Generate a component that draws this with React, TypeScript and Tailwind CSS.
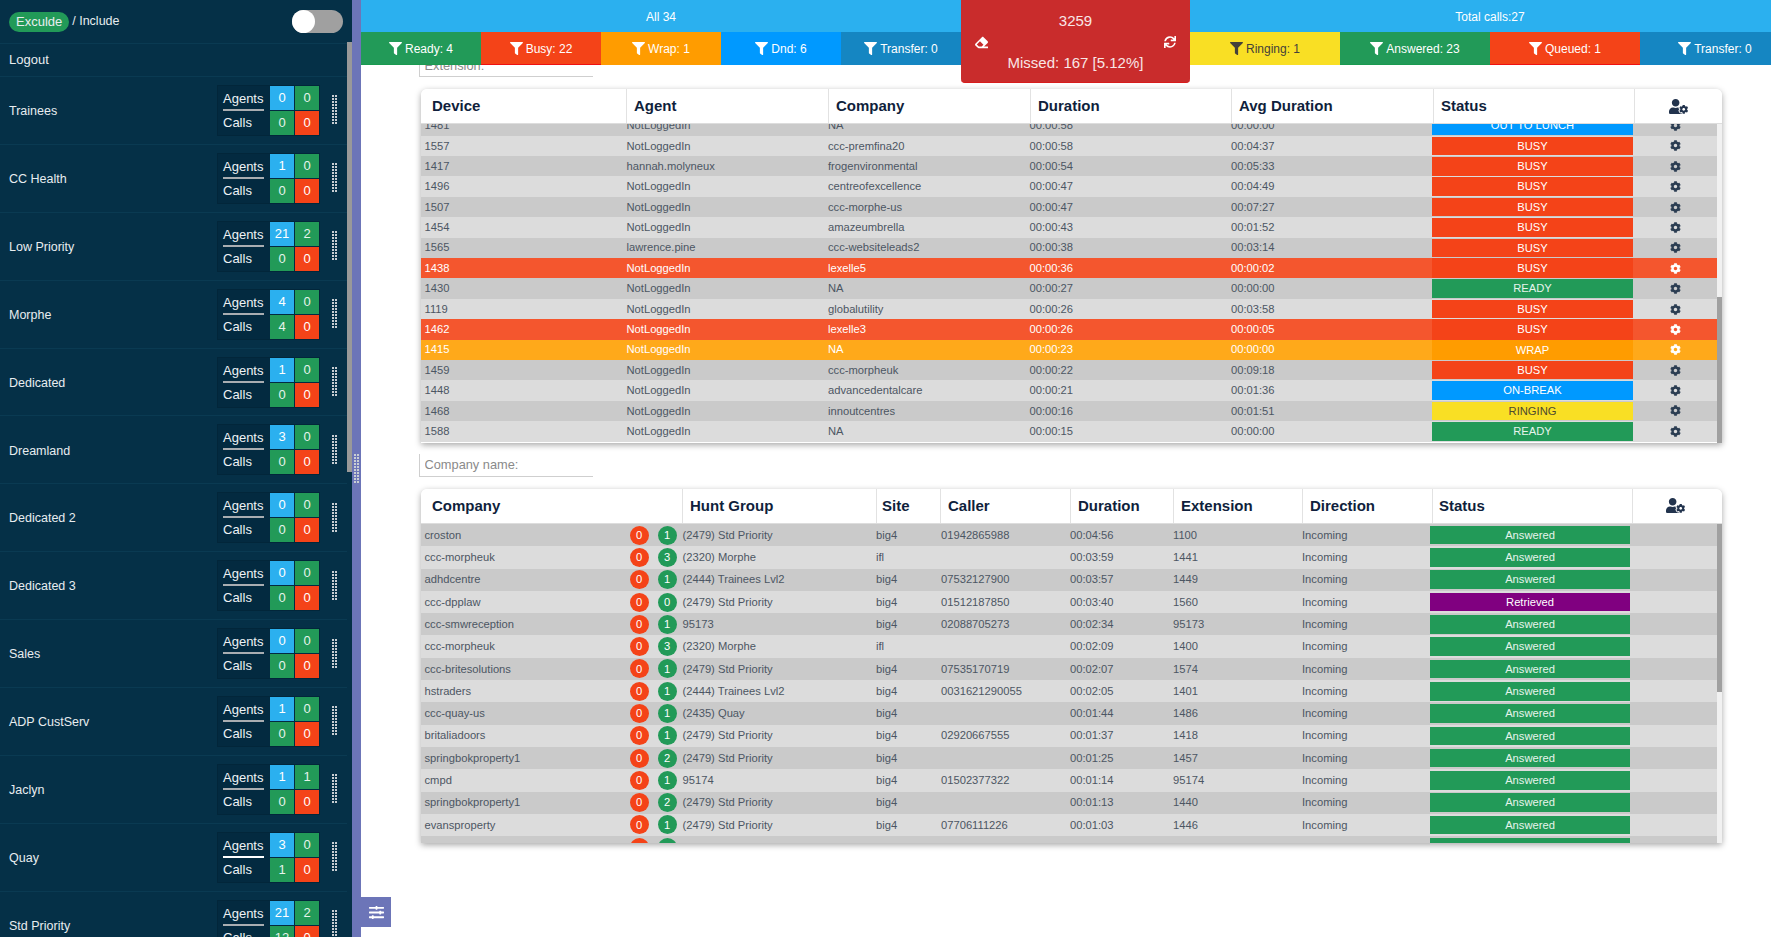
import { FaCog, FaEraser, FaFilter, FaSlidersH, FaSync, FaUserCog } from "react-icons/fa";

const queues = [
  { name: "Trainees", a: [0, 0], c: [0, 0] },
  { name: "CC Health", a: [1, 0], c: [0, 0] },
  { name: "Low Priority", a: [21, 2], c: [0, 0] },
  { name: "Morphe", a: [4, 0], c: [4, 0] },
  { name: "Dedicated", a: [1, 0], c: [0, 0] },
  { name: "Dreamland", a: [3, 0], c: [0, 0] },
  { name: "Dedicated 2", a: [0, 0], c: [0, 0] },
  { name: "Dedicated 3", a: [0, 0], c: [0, 0] },
  { name: "Sales", a: [0, 0], c: [0, 0] },
  { name: "ADP CustServ", a: [1, 0], c: [0, 0] },
  { name: "Jaclyn", a: [1, 1], c: [0, 0] },
  { name: "Quay", a: [3, 0], c: [1, 0] },
  { name: "Std Priority", a: [21, 2], c: [12, 0] },
];

const leftStats = [
  { label: "Ready: 4", cls: "bg-[#229a58] border-[#1a9a50]" },
  { label: "Busy: 22", cls: "bg-[#f44318] border-[#f01010]" },
  { label: "Wrap: 1", cls: "bg-[#ff9c00] border-[#ff9c00]" },
  { label: "Dnd: 6", cls: "bg-[#0099ff] border-[#0099ff]" },
  { label: "Transfer: 0", cls: "bg-[#1586c2] border-[#1586c2]" },
];

const rightStats = [
  { label: "Ringing: 1", cls: "bg-[#f9df24] border-[#f9df24] text-[#44413a]" },
  { label: "Answered: 23", cls: "bg-[#229a58] border-[#1a9a50] text-white" },
  { label: "Queued: 1", cls: "bg-[#f44318] border-[#f01010] text-white" },
  { label: "Transfer: 0", cls: "bg-[#1586c2] border-[#1586c2] text-white" },
];

const statusCls: Record<string, string> = {
  "OUT TO LUNCH": "bg-[#0099ff] text-white",
  BUSY: "bg-[#f44318] text-white",
  READY: "bg-[#229a58] text-[#e6f4ec]",
  WRAP: "bg-[#ff9c00] text-white",
  "ON-BREAK": "bg-[#0099ff] text-white",
  RINGING: "bg-[#f9df24] text-[#4c4a30]",
};

const devices = [
  ["1481", "NotLoggedIn", "NA", "00:00:58", "00:00:00", "OUT TO LUNCH"],
  ["1557", "NotLoggedIn", "ccc-premfina20", "00:00:58", "00:04:37", "BUSY"],
  ["1417", "hannah.molyneux", "frogenvironmental", "00:00:54", "00:05:33", "BUSY"],
  ["1496", "NotLoggedIn", "centreofexcellence", "00:00:47", "00:04:49", "BUSY"],
  ["1507", "NotLoggedIn", "ccc-morphe-us", "00:00:47", "00:07:27", "BUSY"],
  ["1454", "NotLoggedIn", "amazeumbrella", "00:00:43", "00:01:52", "BUSY"],
  ["1565", "lawrence.pine", "ccc-websiteleads2", "00:00:38", "00:03:14", "BUSY"],
  ["1438", "NotLoggedIn", "lexelle5", "00:00:36", "00:00:02", "BUSY", "red"],
  ["1430", "NotLoggedIn", "NA", "00:00:27", "00:00:00", "READY"],
  ["1119", "NotLoggedIn", "globalutility", "00:00:26", "00:03:58", "BUSY"],
  ["1462", "NotLoggedIn", "lexelle3", "00:00:26", "00:00:05", "BUSY", "red"],
  ["1415", "NotLoggedIn", "NA", "00:00:23", "00:00:00", "WRAP", "orange"],
  ["1459", "NotLoggedIn", "ccc-morpheuk", "00:00:22", "00:09:18", "BUSY"],
  ["1448", "NotLoggedIn", "advancedentalcare", "00:00:21", "00:01:36", "ON-BREAK"],
  ["1468", "NotLoggedIn", "innoutcentres", "00:00:16", "00:01:51", "RINGING"],
  ["1588", "NotLoggedIn", "NA", "00:00:15", "00:00:00", "READY"],
];

const calls = [
  ["croston", 0, 1, "(2479) Std Priority", "big4", "01942865988", "00:04:56", "1100", "Answered"],
  ["ccc-morpheuk", 0, 3, "(2320) Morphe", "ifl", "", "00:03:59", "1441", "Answered"],
  ["adhdcentre", 0, 1, "(2444) Trainees Lvl2", "big4", "07532127900", "00:03:57", "1449", "Answered"],
  ["ccc-dpplaw", 0, 0, "(2479) Std Priority", "big4", "01512187850", "00:03:40", "1560", "Retrieved"],
  ["ccc-smwreception", 0, 1, "95173", "big4", "02088705273", "00:02:34", "95173", "Answered"],
  ["ccc-morpheuk", 0, 3, "(2320) Morphe", "ifl", "", "00:02:09", "1400", "Answered"],
  ["ccc-britesolutions", 0, 1, "(2479) Std Priority", "big4", "07535170719", "00:02:07", "1574", "Answered"],
  ["hstraders", 0, 1, "(2444) Trainees Lvl2", "big4", "0031621290055", "00:02:05", "1401", "Answered"],
  ["ccc-quay-us", 0, 1, "(2435) Quay", "big4", "", "00:01:44", "1486", "Answered"],
  ["britaliadoors", 0, 1, "(2479) Std Priority", "big4", "02920667555", "00:01:37", "1418", "Answered"],
  ["springbokproperty1", 0, 2, "(2479) Std Priority", "big4", "", "00:01:25", "1457", "Answered"],
  ["cmpd", 0, 1, "95174", "big4", "01502377322", "00:01:14", "95174", "Answered"],
  ["springbokproperty1", 0, 2, "(2479) Std Priority", "big4", "", "00:01:13", "1440", "Answered"],
  ["evansproperty", 0, 1, "(2479) Std Priority", "big4", "07706111226", "00:01:03", "1446", "Answered"],
  ["", 0, 1, "", "", "", "", "", ""],
];

function Grip() {
  const rows = Array.from({ length: 10 }, (_, i) => i);
  return (
    <svg width="5" height="30" viewBox="0 0 5 30" className="shrink-0">
      {rows.map((i) => (
        <g key={i} fill="#c9ced3">
          <rect x="0" y={i * 3} width="2" height="2" />
          <rect x="3" y={i * 3} width="2" height="2" />
        </g>
      ))}
    </svg>
  );
}

function QueueRow({ q, bright }: { q: (typeof queues)[number]; bright: boolean }) {
  return (
    <div className="flex h-[67.9px] shrink-0 items-center border-b border-[#0a3a52] pl-[9px] pr-[10px]">
      <div className="flex-1 pt-[2px] text-[12.5px] text-[#e8edf0]">{q.name}</div>
      <div className="flex h-[51px] w-[103px] border border-[#02263a] bg-[#032a40]">
        <div className="flex w-[52px] flex-col pl-[5px] text-[13px] text-[#eef2f5]">
          <div className={`h-[25px] w-[41px] border-b-2 leading-[25px] ${bright ? "border-white" : "border-[#a9adb1]"}`}>Agents</div>
          <div className="h-[24px] leading-[24px]">Calls</div>
        </div>
        <div className="grid flex-1 grid-cols-2 gap-px text-center text-[13px] leading-[24px] text-[#e6f4ec]">
          <div className="bg-[#2bb0ef] text-white">{q.a[0]}</div>
          <div className="bg-[#229a58]">{q.a[1]}</div>
          <div className="bg-[#229a58]">{q.c[0]}</div>
          <div className="bg-[#f44318] text-white">{q.c[1]}</div>
        </div>
      </div>
      <div className="ml-[12px]">
        <Grip />
      </div>
    </div>
  );
}

function Sidebar() {
  return (
    <aside className="flex h-full w-[352px] shrink-0 flex-col bg-[#053047]">
      <div className="flex h-[44px] shrink-0 items-center border-b border-[#0a3a52] pl-[9px] pr-[9px] text-[13px] text-[#e8edf0]">
        <span className="rounded-full bg-[#229a58] px-[7px] leading-[20px]">Exculde</span>
        <span className="ml-[3px] flex-1 text-[12.5px]">/ Include</span>
        <div className="flex h-[23px] w-[51px] items-center rounded-full bg-[#a0a0a0]">
          <div className="h-[23px] w-[23px] rounded-full bg-white" />
        </div>
      </div>
      <div className="flex min-h-0 flex-1">
        <div className="flex w-[347px] flex-col overflow-hidden">
          <div className="flex h-[33px] shrink-0 items-center border-b border-[#0a3a52] pl-[9px] text-[13px] text-[#e8edf0]">Logout</div>
          {queues.map((q) => (
            <QueueRow key={q.name} q={q} bright={q.name === "Quay"} />
          ))}
        </div>
        <div className="-mt-[2px] h-[430px] w-[5px] bg-[#999999]" />
      </div>
    </aside>
  );
}

function Stat({ label, cls }: { label: string; cls: string }) {
  return (
    <div className={`flex h-full items-center justify-center gap-[3px] border-b pt-[1px] text-xs ${cls}`}>
      <FaFilter size={13} />
      <span>{label}</span>
    </div>
  );
}

function Header() {
  return (
    <header className="flex h-[65px] shrink-0 text-white">
      <div className="flex w-[600px] shrink-0 flex-col">
        <div className="flex h-[32px] items-center justify-center bg-[#2bb0ef] pt-[1px] text-xs">All 34</div>
        <div className="grid h-[33px] grid-cols-5">
          {leftStats.map((s) => (
            <Stat key={s.label} {...s} />
          ))}
        </div>
      </div>
      <div className="relative z-10 flex h-[83px] w-[229px] shrink-0 flex-col items-center rounded-b-[4px] border-b border-[#d81c1c] bg-[#c92c2c] text-[15px] text-[#f8e6e6]">
        <div className="mt-[12px] leading-[18px]">3259</div>
        <div className="mt-[3px] flex h-[18px] w-full items-center justify-between pl-[14px] pr-[14px]">
          <FaEraser size={13} className="text-white" />
          <FaSync size={12} className="text-white" />
        </div>
        <div className="mt-[3px] leading-[18px]">Missed: 167 [5.12%]</div>
      </div>
      <div className="flex min-w-0 flex-1 flex-col overflow-hidden">
        <div className="flex h-[32px] w-[600px] shrink-0 items-center justify-center pt-[1px] text-xs">Total calls:27</div>
        <div className="grid h-[33px] w-[600px] shrink-0 grid-cols-4">
          {rightStats.map((s) => (
            <Stat key={s.label} {...s} />
          ))}
        </div>
      </div>
    </header>
  );
}

function Scrollbar({ top, height }: { top: string; height: string }) {
  return (
    <div className="w-[5px] shrink-0 bg-[#f1f1f1]">
      <div className={`${top} ${height} bg-[#a0a0a0]`} />
    </div>
  );
}

function FilterInput({ placeholder }: { placeholder: string }) {
  return (
    <input
      placeholder={placeholder}
      className="-ml-[2px] block h-[23px] w-[174px] border-b border-l border-[#cfcfcf] pl-[4.5px] text-[12.8px] outline-none placeholder:text-[#8a8a8a]"
    />
  );
}

function HeadCell({ label, cls }: { label: string; cls: string }) {
  return <div className={`flex h-full items-center border-r border-[#e2e2e2] text-[15px] font-bold text-[#101f3c] ${cls}`}>{label}</div>;
}

function DeviceTable() {
  return (
    <section className="mt-[12px] overflow-hidden rounded-t-[6px] shadow-[0_2px_6px_rgba(0,0,0,0.35)]">
      <div className="flex h-[35px] border-b border-[#dddddd] bg-white">
        <HeadCell label="Device" cls="w-[206px] pl-[11px]" />
        <HeadCell label="Agent" cls="w-[202px] pl-[7px]" />
        <HeadCell label="Company" cls="w-[202px] pl-[7px]" />
        <HeadCell label="Duration" cls="w-[201px] pl-[7px]" />
        <HeadCell label="Avg Duration" cls="w-[202px] pl-[7px]" />
        <HeadCell label="Status" cls="w-[201px] pl-[7px]" />
        <div className="flex flex-1 items-center justify-center text-[#22334d]">
          <FaUserCog size={19} />
        </div>
      </div>
      <div className="flex h-[318.7px]">
        <div className="min-w-0 flex-1 overflow-hidden">
          <div className="-mt-[8.7px] text-[11.2px] text-[#4c5663]">
            {devices.map((d) => {
              const hl = d[6];
              const rowCls = hl === "red" ? "bg-[#f4562e] text-white" : hl === "orange" ? "bg-[#ffa91a] text-white" : "odd:bg-[#cacaca] even:bg-[#dcdcdc]";
              return (
                <div key={d[0]} className={`flex h-[20.4px] items-center ${rowCls}`}>
                  <div className="w-[205.5px] pl-[3.5px]">{d[0]}</div>
                  <div className="w-[201.5px]">{d[1]}</div>
                  <div className="w-[201.5px]">{d[2]}</div>
                  <div className="w-[201.5px]">{d[3]}</div>
                  <div className="w-[201px]">{d[4]}</div>
                  <div className={`w-[201px] text-center ${hl ? "h-full leading-[20.4px]" : "h-[18.6px] leading-[18.6px]"} ${statusCls[d[5]]}`}>{d[5]}</div>
                  <div className={`flex flex-1 justify-center ${hl ? "text-white" : "text-[#2b3d52]"}`}>
                    <FaCog size={11} />
                  </div>
                </div>
              );
            })}
          </div>
        </div>
        <Scrollbar top="mt-[173px]" height="h-[145.7px]" />
      </div>
    </section>
  );
}

function Badge({ n, cls }: { n: number; cls: string }) {
  return <span className={`flex h-[19px] w-[19px] items-center justify-center rounded-full text-white ${cls}`}>{n}</span>;
}

function CallTable() {
  return (
    <section className="mt-[12px] overflow-hidden rounded-t-[6px] shadow-[0_2px_6px_rgba(0,0,0,0.35)]">
      <div className="flex h-[35px] border-b border-[#dddddd] bg-white">
        <HeadCell label="Company" cls="w-[262px] pl-[11px]" />
        <HeadCell label="Hunt Group" cls="w-[194px] pl-[7px]" />
        <HeadCell label="Site" cls="w-[64px] pl-[5px]" />
        <HeadCell label="Caller" cls="w-[130px] pl-[7px]" />
        <HeadCell label="Duration" cls="w-[103px] pl-[7px]" />
        <HeadCell label="Extension" cls="w-[129px] pl-[7px]" />
        <HeadCell label="Direction" cls="w-[130px] pl-[7px]" />
        <HeadCell label="Status" cls="w-[200px] pl-[6px]" />
        <div className="flex flex-1 items-center justify-center pr-[5px] text-[#22334d]">
          <FaUserCog size={19} />
        </div>
      </div>
      <div className="flex h-[318.7px]">
        <div className="min-w-0 flex-1 overflow-hidden text-[11.2px] text-[#4c5663]">
          {calls.map((c, i) => (
            <div key={i} className="flex h-[22.3px] items-center odd:bg-[#cacaca] even:bg-[#dcdcdc]">
              <div className="flex w-[261.5px] items-center pl-[3.5px] pr-[6px]">
                <span className="flex-1">{c[0]}</span>
                <Badge n={c[1] as number} cls="bg-[#f44318]" />
                <span className="w-[9px]" />
                <Badge n={c[2] as number} cls="bg-[#229a58]" />
              </div>
              <div className="w-[193.5px]">{c[3]}</div>
              <div className="w-[65px]">{c[4]}</div>
              <div className="w-[129px]">{c[5]}</div>
              <div className="w-[103px]">{c[6]}</div>
              <div className="w-[129px]">{c[7]}</div>
              <div className="w-[128px]">{c[0] ? "Incoming" : ""}</div>
              <div className={`h-[18.6px] w-[200px] text-center leading-[18.6px] ${c[8] === "Retrieved" ? "bg-[#800080] text-white" : "bg-[#229a58] text-[#e6f4ec]"}`}>{c[8]}</div>
            </div>
          ))}
        </div>
        <Scrollbar top="mt-0" height="h-[168px]" />
      </div>
    </section>
  );
}

export default function App() {
  return (
    <div className="flex h-[937px] w-[1771px] overflow-hidden bg-white font-['Liberation_Sans',Arial,sans-serif]">
      <Sidebar />
      <div className="flex h-full w-[9px] shrink-0 items-center justify-center bg-[#6c75b8]">
        <Grip />
      </div>
      <main className="relative flex min-w-0 flex-1 flex-col overflow-hidden bg-[#2bb0ef]">
        <Header />
        <div className="min-h-0 flex-1 overflow-hidden bg-white pl-[60px] pr-[49px]">
          <div className="-mt-[11px]">
            <FilterInput placeholder="Extension:" />
          </div>
          <DeviceTable />
          <div className="mt-[11.3px]">
            <FilterInput placeholder="Company name:" />
          </div>
          <CallTable />
        </div>
        <button className="absolute bottom-[10px] left-0 flex h-[30px] w-[30px] items-center justify-center bg-[#6c75b8] text-white">
          <FaSlidersH size={15} />
        </button>
      </main>
    </div>
  );
}
